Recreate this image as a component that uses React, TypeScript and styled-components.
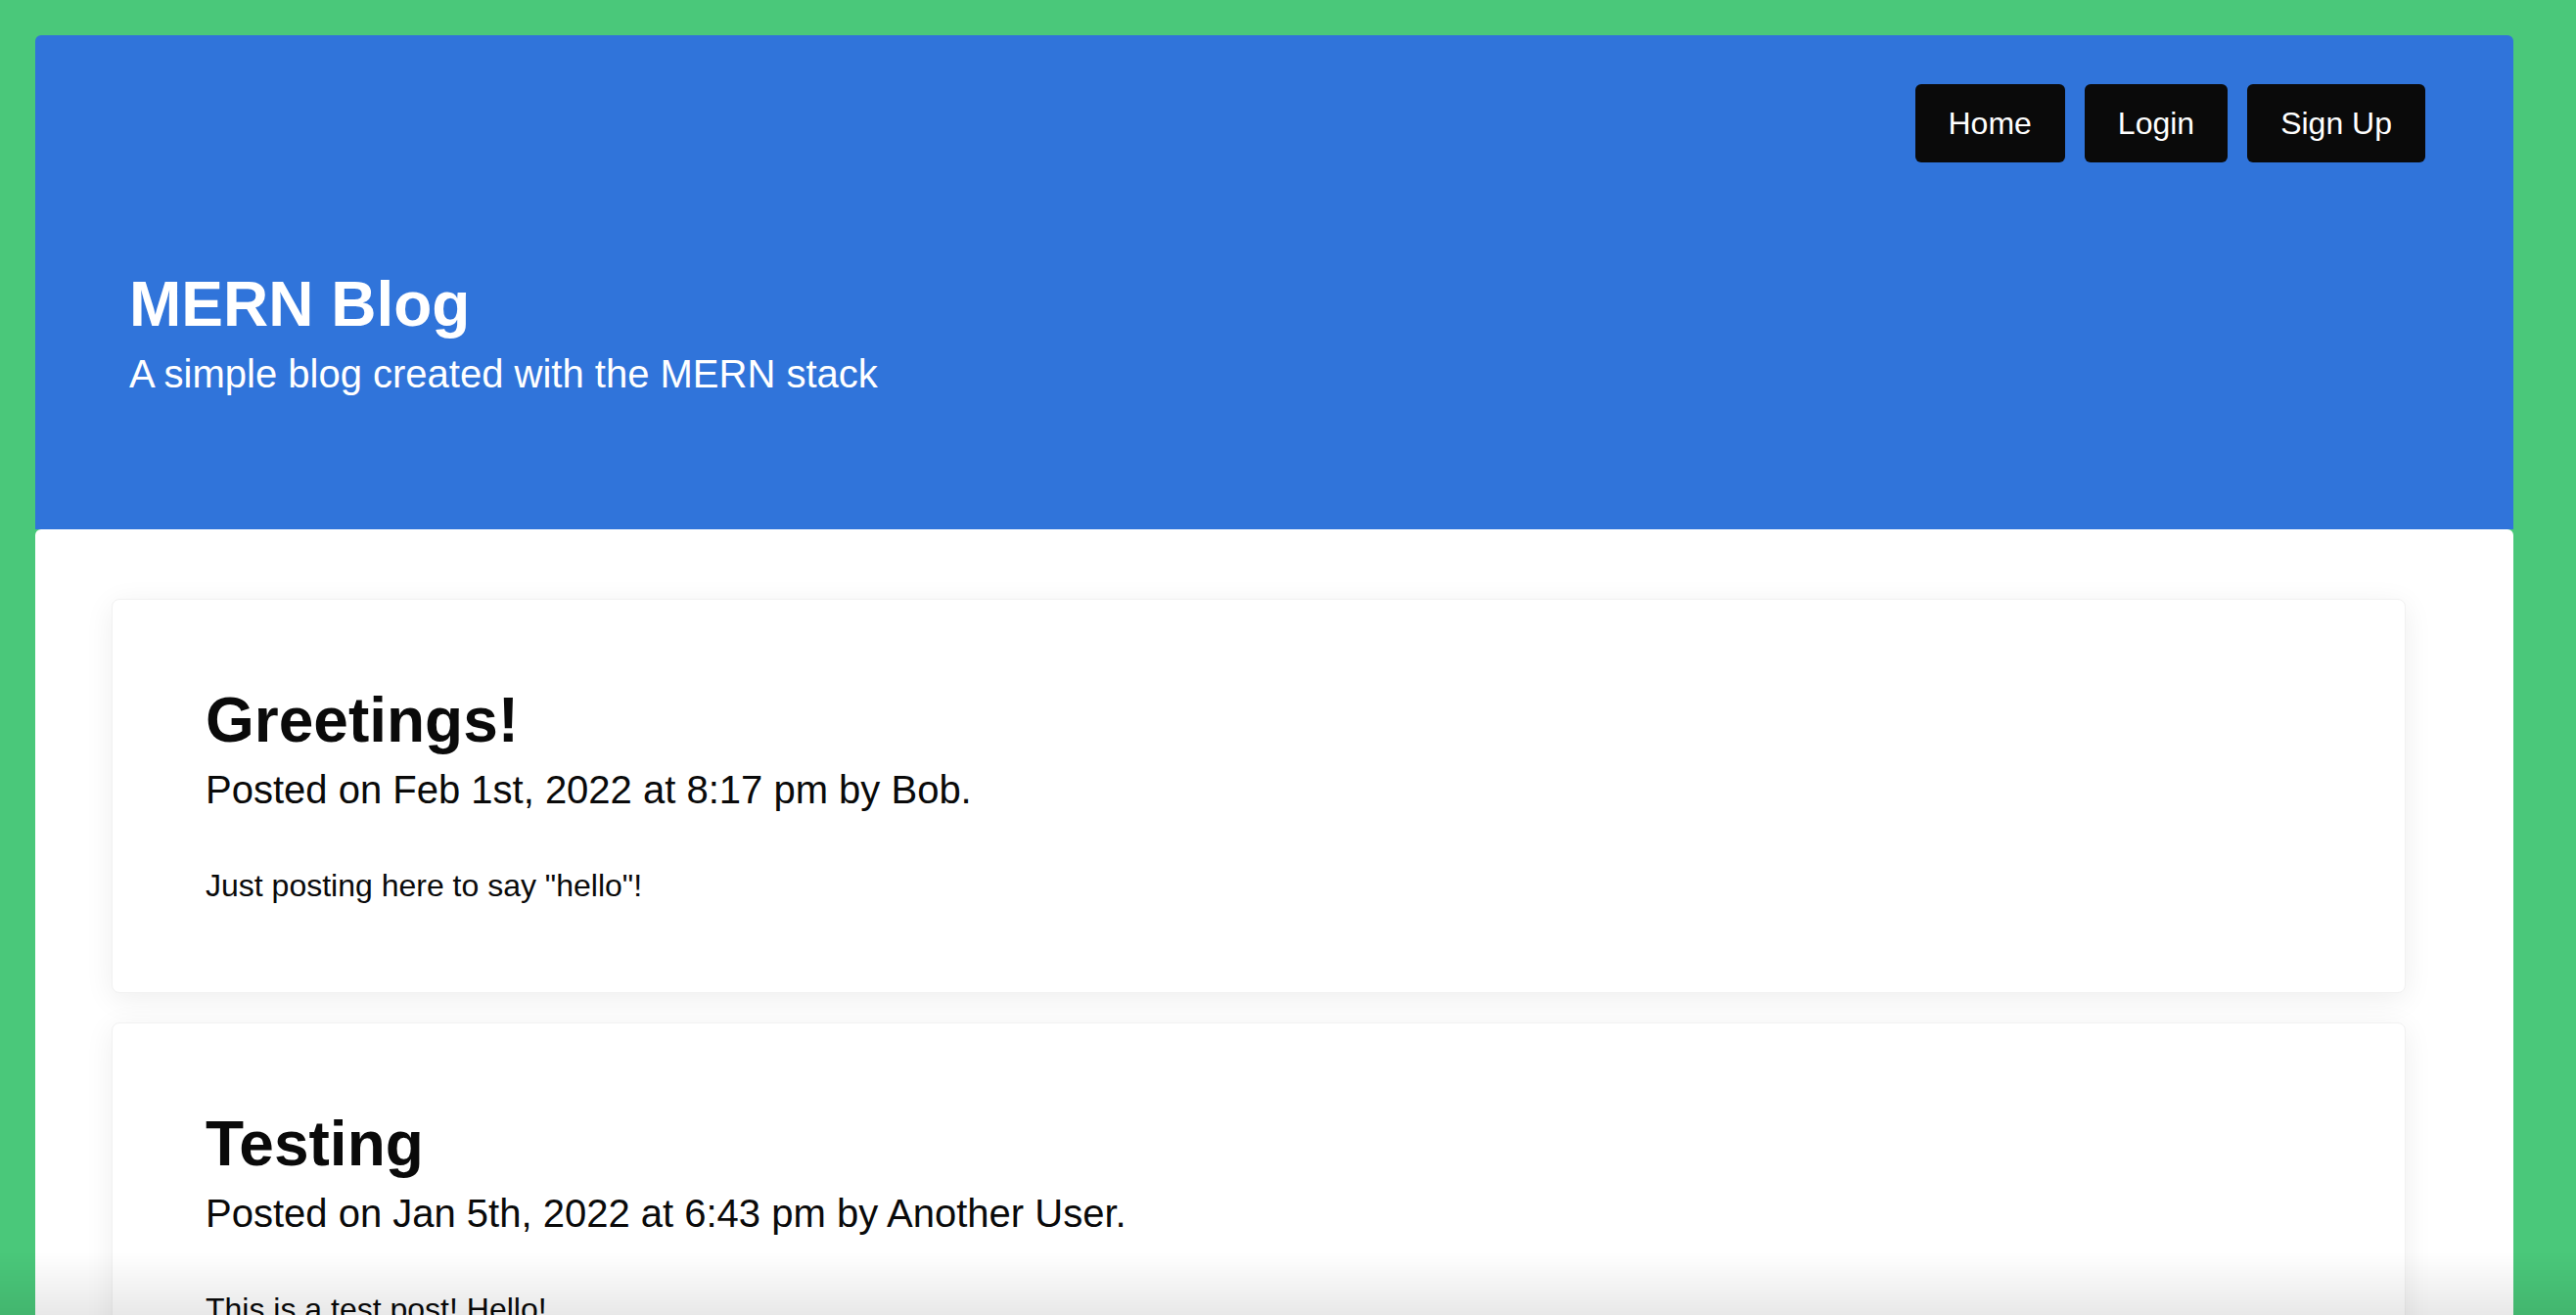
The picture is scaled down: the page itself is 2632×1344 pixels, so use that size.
import React from "react";
import styled, { createGlobalStyle } from "styled-components";

const GlobalStyle = createGlobalStyle`
  html, body {
    margin: 0;
    padding: 0;
    background: #4ac87a;
    font-family: "Liberation Sans", Arial, Helvetica, sans-serif;
    color: #0a0a0a;
  }
  * { box-sizing: border-box; }
`;

const Page = styled.div`
  padding: 36px 64px 0 36px;
  min-height: 100vh;
`;

const Header = styled.header`
  background: #3074da;
  border-radius: 6px 6px 0 0;
  padding: 50px 90px 136px 96px;
  display: flex;
  flex-direction: column;
`;

const Nav = styled.nav`
  display: flex;
  justify-content: flex-end;
  gap: 20px;
`;

const NavButton = styled.a`
  display: flex;
  align-items: center;
  height: 80px;
  padding: 0 34px;
  background: #0a0a0a;
  color: #ffffff;
  border-radius: 6px;
  font-size: 32px;
  text-decoration: none;
  cursor: pointer;
`;

const Brand = styled.div`
  margin-top: 108px;
  display: flex;
  flex-direction: column;
  gap: 12px;
  color: #ffffff;
`;

const Title = styled.h1`
  margin: 0;
  font-size: 64px;
  font-weight: 700;
  line-height: normal;
`;

const Tagline = styled.p`
  margin: 0;
  font-size: 40px;
  line-height: normal;
`;

const Main = styled.main`
  background: #ffffff;
  border-radius: 6px 6px 0 0;
  padding: 71px 110px 60px 78px;
  display: flex;
  flex-direction: column;
  gap: 30px;
`;

const Card = styled.article`
  background: #ffffff;
  border-radius: 8px;
  border: 1px solid #f1f1f1;
  box-shadow: 0 6px 30px rgba(0, 0, 0, 0.07);
  padding: 86px 96px 90px 95px;
  display: flex;
  flex-direction: column;
`;

const PostTitle = styled.h2`
  margin: 0;
  font-size: 64px;
  font-weight: 700;
  line-height: normal;
`;

const Meta = styled.p`
  margin: 12px 0 0;
  font-size: 40px;
  line-height: normal;
`;

const Body = styled.p`
  margin: 57px 0 0;
  font-size: 32px;
  line-height: normal;
`;

const BottomFade = styled.div`
  position: fixed;
  left: 0;
  right: 0;
  bottom: 0;
  height: 64px;
  pointer-events: none;
  background: linear-gradient(to bottom, rgba(0, 0, 0, 0), rgba(0, 0, 0, 0.09));
`;

const posts = [
  {
    title: "Greetings!",
    meta: "Posted on Feb 1st, 2022 at 8:17 pm by Bob.",
    body: 'Just posting here to say "hello"!',
  },
  {
    title: "Testing",
    meta: "Posted on Jan 5th, 2022 at 6:43 pm by Another User.",
    body: "This is a test post! Hello!",
  },
];

export default function App() {
  return (
    <>
      <GlobalStyle />
      <Page>
        <Header>
          <Nav>
            <NavButton>Home</NavButton>
            <NavButton>Login</NavButton>
            <NavButton>Sign Up</NavButton>
          </Nav>
          <Brand>
            <Title>MERN Blog</Title>
            <Tagline>A simple blog created with the MERN stack</Tagline>
          </Brand>
        </Header>
        <Main>
          {posts.map((p) => (
            <Card key={p.title}>
              <PostTitle>{p.title}</PostTitle>
              <Meta>{p.meta}</Meta>
              <Body>{p.body}</Body>
            </Card>
          ))}
        </Main>
      </Page>
      <BottomFade />
    </>
  );
}
